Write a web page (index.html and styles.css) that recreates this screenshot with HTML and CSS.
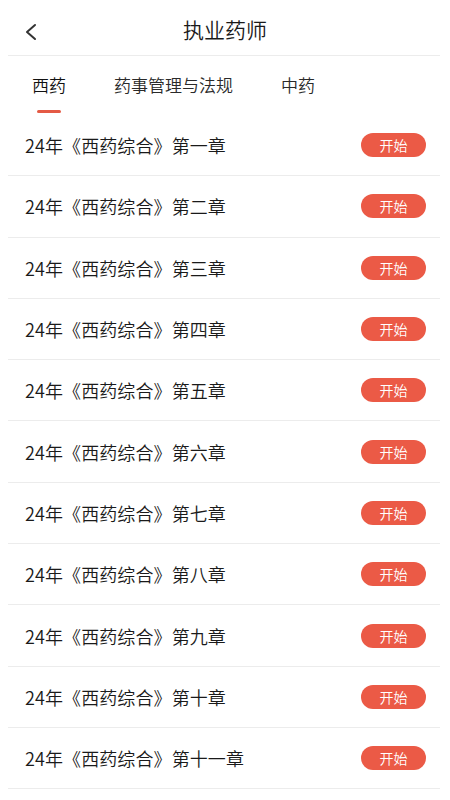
FILE: index.html
```html
<!DOCTYPE html>
<html lang="zh-CN">
<head>
<meta charset="utf-8">
<title>执业药师</title>
<link rel="stylesheet" href="styles.css">
</head>
<body>
<div class="page">
  <header class="header">
    <svg class="back" width="14" height="18" viewBox="0 0 14 18"><polyline points="11,2 3,9 11,16" fill="none" stroke="#333" stroke-width="2" stroke-linecap="round" stroke-linejoin="round"/></svg>
    <h1 class="title">执业药师</h1>
  </header>
  <nav class="tabs">
    <div class="tab active"><span>西药</span><i class="bar"></i></div>
    <div class="tab"><span>药事管理与法规</span><i class="bar"></i></div>
    <div class="tab"><span>中药</span><i class="bar"></i></div>
  </nav>
  <ul class="list">
    <li class="row"><span class="name">24年《西药综合》第一章</span><span class="btn">开始</span></li>
    <li class="row"><span class="name">24年《西药综合》第二章</span><span class="btn">开始</span></li>
    <li class="row"><span class="name">24年《西药综合》第三章</span><span class="btn">开始</span></li>
    <li class="row"><span class="name">24年《西药综合》第四章</span><span class="btn">开始</span></li>
    <li class="row"><span class="name">24年《西药综合》第五章</span><span class="btn">开始</span></li>
    <li class="row"><span class="name">24年《西药综合》第六章</span><span class="btn">开始</span></li>
    <li class="row"><span class="name">24年《西药综合》第七章</span><span class="btn">开始</span></li>
    <li class="row"><span class="name">24年《西药综合》第八章</span><span class="btn">开始</span></li>
    <li class="row"><span class="name">24年《西药综合》第九章</span><span class="btn">开始</span></li>
    <li class="row"><span class="name">24年《西药综合》第十章</span><span class="btn">开始</span></li>
    <li class="row"><span class="name">24年《西药综合》第十一章</span><span class="btn">开始</span></li>
  </ul>
</div>
</body>
</html>
```
FILE: styles.css
```css
* { box-sizing: border-box; }
html, body { margin: 0; padding: 0; background: #fff; }
body {
  font-family: "Noto Sans CJK SC", "Noto Sans", sans-serif;
  color: #222;
  overflow: hidden;
}
.page {
  margin: 0 10px 0 8px;
}
.header {
  position: relative;
  height: 56px;
  border-bottom: 1px solid #ececec;
  display: flex;
  align-items: center;
  justify-content: center;
}
.back {
  position: absolute;
  left: 16px;
  top: 23px;
}
.title {
  margin: 0 0 0 2px;
  font-size: 21px;
  font-weight: 350;
  line-height: 28px;
  color: #1a1a1a;
  padding-top: 3px;
}
.tabs {
  display: flex;
  gap: 48px;
  padding: 17px 0 2px 24px;
}
.tab {
  display: flex;
  flex-direction: column;
  align-items: center;
  font-size: 17px;
  line-height: 24px;
  color: #2a2a2a;
  font-weight: 350;
}
.tab.active { color: #111; }
.bar {
  display: block;
  width: 24px;
  height: 3px;
  border-radius: 2px;
  margin-top: 13px;
  background: transparent;
}
.tab.active .bar { background: #e45a45; }
.list {
  list-style: none;
  margin: 0;
  padding: 0;
}
.row {
  height: 61.3px;
  border-bottom: 1px solid #ececec;
  display: flex;
  align-items: center;
  justify-content: space-between;
  padding: 0 14px 0 17px;
}
.name {
  font-size: 18px;
  line-height: 24px;
  color: #1a1a1a;
  font-weight: 350;
  letter-spacing: 0.1px;
}
.btn {
  width: 65px;
  height: 24px;
  border-radius: 12px;
  background: #eb5a46;
  color: #fff;
  font-size: 14px;
  line-height: 24px;
  text-align: center;
  font-weight: 350;
}
```
